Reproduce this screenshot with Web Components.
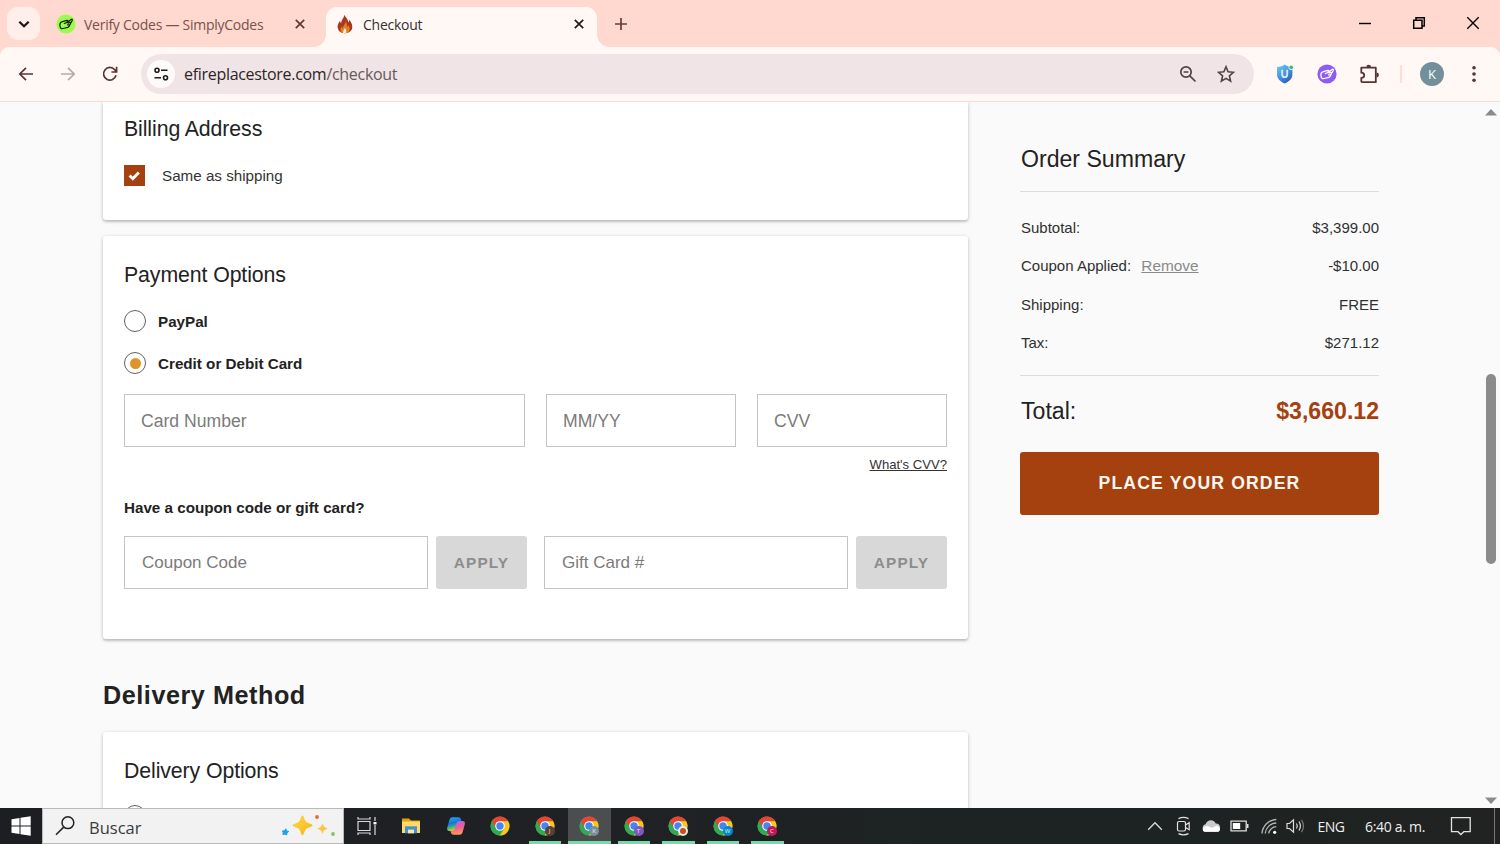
<!DOCTYPE html>
<html lang="en">
<head>
<meta charset="utf-8">
<title>Checkout</title>
<style>
    html, body { margin: 0; height: 100%; }
    body {
        width: 1500px;
        height: 844px;
        overflow: hidden;
        font-family: "Liberation Sans", Arial, sans-serif;
        color: #222;
    }
</style>
</head>
<body>
<browser-window></browser-window>
<script>
const ICONS = {
    chevron: [16, 16, '<path d="M3.300 5.700L8 10.300l4.700-4.600" fill="none" stroke="#24120f" stroke-width="2.200"/>'],
    close: [12, 12, '<path d="M1.800 1.800l8.400 8.400M10.200 1.800l-8.400 8.400" fill="none" stroke="currentColor" stroke-width="1.700"/>'],
    plus: [14, 14, '<path d="M7 1v12M1 7h12" stroke="#6b3b34" stroke-width="1.700"/>'],
    hand: [20, 20, `<circle cx="10" cy="10" r="9.600" fill="var(--disc)"/>
        <path d="M11 6.300L6.300 7.700C4.400 8.300 3.600 10 4 12.200c.3 1.800 1.200 2.700 3 2.300l4.800-1.200c1.200-.4 1.700-1.300 2.200-2.800l2.300-4.200c.3-1-.5-1.300-1.300-.8L11.300 8.400 8.300 9.500M11 6.300c1.300-.1 1.200 1.100.1 1.500M14 10.500l-2.500.4M12.300 9.200L14 8.300"
        fill="none" stroke="var(--ink)" stroke-width="1.250" stroke-linecap="round" stroke-linejoin="round"/>`],
    fire: [18, 20, `<path d="M8.500.7c.6 2.300 3.600 4 3.700 7.600.9-.5 1-1.500 1-2.600 2.300 2.400 3.700 6 2.900 8.900-.6 2.500-3.200 4.600-6.900 4.600-4.500 0-7.600-2.600-7.600-6.400 0-2.500 1.300-4.300 2.500-6 .2 1 .3 2 1.200 2.500C5 6 7.700 4.500 8.500.7z" fill="#aa371d"/>
        <path d="M9.700 7.300c1.600 2.200.8 3.700 1.800 5.600.6-.5.800-1 .9-1.800 1.600 2.500 1.900 5.700-.4 7.300-2.400 1.300-5.600.8-7-.8-1-1.700-.3-3.800 1-5.300.2 1 .4 1.700 1 2C6.700 11.700 9.500 10.600 9.700 7.300z" fill="#df8126"/>
        <path d="M7.200 19c-.4-2.400 1.100-3.300 1.700-5.300 1.100 2 1.900 3.300 1 5.300z" fill="#fff0d8"/>`],
    minimize: [14, 14, '<path d="M1 7.500h12" stroke="#000" stroke-width="1.400"/>'],
    restore: [14, 14, '<path d="M4 4V1.700h8.300V10H10M1.700 4.200H10v8H1.700z" fill="none" stroke="#000" stroke-width="1.500"/>'],
    exit: [14, 14, '<path d="M1.300 1.300l11.400 11.400M12.700 1.300L1.300 12.700" stroke="#000" stroke-width="1.400"/>'],
    back: [16, 16, '<path d="M15 8H2M8 1.800L1.800 8 8 14.200" fill="none" stroke="currentColor" stroke-width="1.700"/>'],
    forward: [16, 16, '<path d="M1 8h13M8 1.800L14.200 8 8 14.200" fill="none" stroke="currentColor" stroke-width="1.700"/>'],
    reload: [16, 16, '<path d="M14 9.300A6.300 6.300 0 1 1 12.700 3.700l1.600 1.700M14.600.8v5.200H9.400" fill="none" stroke="#5a3430" stroke-width="1.700"/>'],
    tune: [16, 16, '<g fill="none" stroke="#1f1b1b" stroke-width="1.600"><circle cx="4" cy="4.200" r="2"/><path d="M8 4.200h6.500M1.500 11.800H8"/><circle cx="12.500" cy="11.800" r="2"/></g>'],
    zoomOut: [18, 18, '<g fill="none" stroke="#514345" stroke-width="1.700"><circle cx="7" cy="7" r="5.200"/><path d="M10.800 10.800l5.700 5.700M4.600 7h4.800"/></g>'],
    star: [18, 18, '<path d="M9 1.800l2.100 5 5.400.5-4.100 3.600 1.200 5.300L9 13.400l-4.600 2.800 1.200-5.300L1.500 7.300l5.400-.5z" fill="none" stroke="#514345" stroke-width="1.600"/>'],
    shield: [18, 20, `<defs><linearGradient id="s" x1="0" y1="0" x2=".6" y2="1"><stop stop-color="#74cdf0"/><stop offset=".5" stop-color="#4b9ce0"/><stop offset="1" stop-color="#2c62bd"/></linearGradient></defs>
        <path d="M8.700.6c2 1.600 4.400 2.300 7.700 2.300v7.300c0 4.300-3 7.300-7.700 9.200C4 17.500 1 14.500 1 10.200V2.900c3.200 0 5.700-.7 7.700-2.300z" fill="url(#s)"/>
        <path d="M6.200 5.800v4.600c0 3.600 5 3.600 5 0V5.800" fill="none" stroke="#d3eafa" stroke-width="1.900"/><circle cx="15.200" cy="3.300" r="2.600" fill="#fff8f5"/><circle cx="15.200" cy="3.300" r="1.900" fill="#47b58a"/>`],
    puzzle: [20, 20, '<path d="M2.500 3.700h14.300v14.500H3.100q-.8 0-.8-.9v-3.400c3.900 0 3.900-5.200 0-5.200V3.700z" fill="none" stroke="#5a3430" stroke-width="1.800" stroke-linejoin="round"/><path d="M7.400 3a2.300 2.300 0 0 1 4.600 0zM17.500 8.600a2.300 2.300 0 0 1 0 4.800z" fill="#5a3430"/>'],
    dots: [6, 18, '<g fill="#5a3430"><circle cx="3" cy="2.700" r="1.800"/><circle cx="3" cy="9" r="1.800"/><circle cx="3" cy="15.300" r="1.800"/></g>'],
    check: [13, 13, '<path d="M1.600 6.500l3.200 3.200 6-6.300" fill="none" stroke="#fff" stroke-width="2.900"/>'],
    up: [12, 7, '<path d="M0 6.500L6 0l6 6.500z" fill="#8b8b8b"/>'],
    down: [12, 7, '<path d="M0 .5L6 7l6-6.500z" fill="#8b8b8b"/>'],
    windows: [20, 20, '<path d="M.5 3.200l8-1.200v7.500h-8zM9.500 1.800l10.200-1.500v9.200H9.500zM.5 10.500h8V18l-8-1.200zM9.500 10.500h10.200v9.200L9.500 18.200z" fill="#fff"/>'],
    search: [20, 20, '<g fill="none" stroke="#222" stroke-width="1.500"><circle cx="12.900" cy="6.700" r="5.900"/><path d="M8.700 11.100L1 18.700"/></g>'],
    sparkles: [56, 24, `<defs><linearGradient id="g" x2="1" y2="1"><stop stop-color="#ffd64b"/><stop offset=".55" stop-color="#fbc52b"/><stop offset="1" stop-color="#f5a61b"/></linearGradient></defs>
        <path d="M22.500 1.500c1.300 0 1.600 3.100 3 5.500 1.500 2.400 7 2.800 7 4.300 0 1.600-5.500 2-7 4.400-1.400 2.300-1.700 5.500-3 5.500s-1.600-3.200-3-5.500c-1.500-2.400-7-2.800-7-4.400 0-1.500 5.500-1.900 7-4.300 1.400-2.400 1.700-5.500 3-5.500z" fill="url(#g)"/>
        <path d="M42.500 10c.8 2.800 1.600 3.600 4.700 4.600-3.100 1-3.900 1.800-4.700 4.600-.8-2.800-1.600-3.600-4.700-4.600 3.100-1 3.900-1.800 4.700-4.600z" fill="#fbc33c" stroke="#fbc33c" stroke-width=".6"/>
        <path d="M5.900 14.800l.6 2.200 2.300.4-1.900 1.600-.2 2-1.900-.9-1.900.6.3-2.100-1-1.500 2.100-.4z" fill="#1da4e9" stroke="#1da4e9" stroke-linejoin="round"/>
        <circle cx="37" cy="3" r="1.900" fill="#ec6633"/><circle cx="53" cy="20" r="1.900" fill="#7dc65b"/>`],
    taskView: [20, 20, '<g fill="none" stroke="#d9d9d9" stroke-width="1.200"><path d="M1 5.500h12v9H1zM1 1v2h12V1M1 19v-2h12v2M18 1v4M18 9v10"/></g><path d="M16.500 6h3v2.400h-3z" fill="#fff"/>'],
    folder: [20, 18, '<path d="M1 1.500h7l2 2h9v3H1z" fill="#e0a30c"/><path d="M1 4.500h18V16H1z" fill="#ffda68"/><path d="M4 9.300h12v7H4z" fill="#4492cf"/><path d="M7 12.600h6v3.700H7z" fill="#ffe99c"/>'],
    copilot: [20, 20, `<defs><linearGradient id="a" x2=".3" y2="1"><stop stop-color="#23b5ee"/><stop offset=".5" stop-color="#1674dc"/><stop offset=".75" stop-color="#38b580"/><stop offset="1" stop-color="#d9cf33"/></linearGradient>
        <linearGradient id="b" x2=".2" y2="1"><stop stop-color="#a866f3"/><stop offset=".55" stop-color="#ee5d99"/><stop offset="1" stop-color="#ff9857"/></linearGradient></defs>
        <path id="r" d="M6.500 1.200h6q2 0 2.400 1.700l.7 2.300h-1.900q-2 0-2.500 2L9.400 13q-.5 1.900-2.400 1.900H3.300Q.6 14.900 1.200 11.800L3.500 3.500Q4.300 1.200 6.500 1.200z" fill="url(#a)"/>
        <path d="M13.500 18.800h-6q-2 0-2.400-1.700l-.7-2.300h1.900q2 0 2.500-2L10.600 7q.5-1.900 2.400-1.900h3.700q2.700 0 2.100 3.100L16.500 16.500q-.8 2.300-3 2.300z" fill="url(#b)"/>`],
    chrome: [20, 20, `<circle cx="10" cy="10" r="9.500" fill="#35a853"/>
        <path d="M10 10L1.800 5.200A9.500 9.500 0 0 1 18.200 5.300H10z" fill="#e94335"/><path d="M10 5.300h8.200A9.500 9.500 0 0 1 9.600 19.500L14.100 12.400z" fill="#fcc51c"/>
        <path d="M1.800 5.200L6 12 10 5.300z" fill="#e94335"/><path d="M1.770 5.250A9.500 9.500 0 0 0 9.600 19.500L14.100 12.400H5.900z" fill="#35a853"/>
        <circle cx="10" cy="10" r="4.800" fill="#fff"/><circle cx="10" cy="10" r="3.700" fill="#4285f4"/>`],
    caret: [16, 10, '<path d="M1.200 8.800L8 1.800l6.800 7" fill="none" stroke="#ddd" stroke-width="1.300"/>'],
    meet: [16, 20, '<g fill="none" stroke="#e2e2e2" stroke-width="1.200"><rect x="2.500" y="5.500" width="8" height="9.500" rx="1.500"/><path d="M10.500 9l3.700-2.300v7L10.500 11.500M3.500 2.600Q8.500.2 13.500 2.600M3.500 17.600q5 2.400 10 0"/></g>'],
    cloud: [20, 14, '<path d="M4.500 12.700a3.900 3.900 0 0 1 0-7.500C6.500 0 13 0 14.800 4.600a4 4 0 0 1 .4 8.100z" fill="#c8cbca"/><path d="M3 12.800a3 3 0 0 1 .2-5c3-2 5.800 0 7.800 1l4.600-2.300c3.400.8 4.600 4.600 1.800 6.300z" fill="#fff"/>'],
    battery: [20, 14, '<path d="M2 2.200h15.200v9.600H2z" fill="none" stroke="#ddd" stroke-width="1.300"/><path d="M3.800 4h7.400v6H3.800z" fill="#fff"/><path d="M17.800 5h1.700v4h-1.700z" fill="#ddd"/>'],
    wifi: [18, 18, '<g fill="none" stroke="#b4b7b6" stroke-width="1.300"><path d="M2 16.500A15 15 0 0 1 16.300 2.500M5.200 16.500A11.400 11.400 0 0 1 16.300 6M8.700 16.500A8 8 0 0 1 16.300 9.700"/></g><circle cx="14.700" cy="15.300" r="1.600" fill="#fff"/>'],
    sound: [20, 18, '<g fill="none" stroke="#ddd" stroke-width="1.200"><path d="M2 6.500h2.500l4-3.700v12.400l-4-3.700H2z"/><path d="M11.500 6.500q1.600 2.500 0 5M14 4.500q2.800 4.500 0 9"/><path d="M16.500 2.800q4 6.200 0 12.400" stroke="#777"/></g>'],
    notice: [22, 20, '<path d="M1.500 1.700h18.700v14h-6.400L10.900 18.500 8 15.700H1.500z" fill="none" stroke="#e2e2e2" stroke-width="1.300"/>']
};

class BaseElement extends HTMLElement {
    constructor() {
        super();
        this.shadow = this.attachShadow({ mode: "open" });
    }
    connectedCallback() {
        this.shadow.innerHTML = this.render();
    }
}

class UiIcon extends BaseElement {
    render() {
        const [w, h, body] = ICONS[this.getAttribute("name")];
        return `<style>
            :host { display: block; flex: none; line-height: 0; }
        </style>
        <svg width="${w}" height="${h}" viewBox="0 0 ${w} ${h}" aria-hidden="true">${body}</svg>`;
    }
}
customElements.define("ui-icon", UiIcon);

class BrowserTab extends BaseElement {
    render() {
        return `<style>
            :host {
                display: flex;
                align-items: center;
                position: relative;
                box-sizing: border-box;
                width: 271px;
                height: 40px;
                padding: 0 12px 5px 9px;
                color: #7c5049;
                font: 14px "Open Sans", "Noto Sans", sans-serif;
                letter-spacing: -.26px;
                border-radius: 11px 11px 0 0;
            }
            :host([active]) { background: #fff8f5; color: #37302f; }
            :host([active])::before, :host([active])::after {
                content: "";
                position: absolute;
                bottom: 0;
                width: 12px;
                height: 12px;
            }
            :host([active])::before {
                left: -12px;
                background: radial-gradient(circle at 0 0, transparent 11.5px, #fff8f5 12px);
            }
            :host([active])::after {
                right: -12px;
                background: radial-gradient(circle at 100% 0, transparent 11.5px, #fff8f5 12px);
            }
            .mark { display: flex; justify-content: center; width: 19px; margin-right: 9px; }
            .title { flex: 1; white-space: nowrap; }
            .close { padding-bottom: 2px; color: #5e3832; }
            :host([active]) .close { color: #211c1b; }
        </style>
        <span class="mark"><slot name="mark"></slot></span>
        <span class="title"><slot></slot></span>
        <ui-icon class="close" name="close"></ui-icon>`;
    }
}
customElements.define("browser-tab", BrowserTab);

class TabStrip extends BaseElement {
    render() {
        return `<style>
            :host { display: flex; height: 47px; background: #ffd9d0; }
            .menu {
                display: flex;
                align-items: center;
                justify-content: center;
                width: 33px;
                height: 33px;
                margin: 7px 15px 0 7px;
                border-radius: 11px;
                background: #ffeee9;
            }
            browser-tab { margin-top: 7px; }
            .first { width: 260px; padding: 0 9px 5px 1px; margin-right: 11px; }
            .plus { padding: 17px 0 0 17px; }
            .controls { display: flex; margin-left: auto; }
            .controls span { display: flex; justify-content: center; width: 54px; padding-top: 16px; }
            ui-icon { --disc: #9dfb4f; --ink: #15240c; }
            .fire { padding-bottom: 2px; }
        </style>
        <span class="menu"><ui-icon name="chevron"></ui-icon></span>
        <browser-tab class="first"><ui-icon slot="mark" class="fire" name="hand"></ui-icon>Verify Codes — SimplyCodes</browser-tab>
        <browser-tab active><ui-icon slot="mark" class="fire" name="fire"></ui-icon>Checkout</browser-tab>
        <ui-icon class="plus" name="plus"></ui-icon>
        <div class="controls">
            <span><ui-icon name="minimize"></ui-icon></span>
            <span><ui-icon name="restore"></ui-icon></span>
            <span><ui-icon name="exit"></ui-icon></span>
        </div>`;
    }
}
customElements.define("tab-strip", TabStrip);

class AddressBar extends BaseElement {
    render() {
        return `<style>
            :host { display: block; background: #ffd9d0; }
            .bar {
                display: flex;
                align-items: center;
                box-sizing: border-box;
                height: 55px;
                padding: 0 5px;
                border-bottom: 1px solid #fadcd6;
                border-radius: 9px 9px 0 0;
                background: #fff8f5;
            }
            .cell { display: flex; justify-content: center; width: 42px; color: #5a3430; }
            .off { color: #b9aaa7; }
            .field {
                display: flex;
                align-items: center;
                flex: 1;
                box-sizing: border-box;
                height: 40px;
                margin: 0 10px;
                padding: 0 19px 0 6px;
                border-radius: 20px;
                background: #f1e4e6;
            }
            .site {
                display: flex;
                align-items: center;
                justify-content: center;
                width: 28px;
                height: 28px;
                margin-right: 9px;
                border-radius: 50%;
                background: #fffafa;
            }
            .url {
                flex: 1;
                font: 16px "Open Sans", "Noto Sans", sans-serif;
                letter-spacing: -.3px;
                color: #2c2526;
            }
            .url i { font-style: normal; color: #67595b; }
            .star { margin-left: 20px; }
            .rule { width: 21px; display: flex; justify-content: center; }
            .rule::before { content: ""; width: 2px; height: 18px; background: #ffdcd4; }
            .avatar {
                width: 24px;
                height: 24px;
                border-radius: 50%;
                background: #71909c;
                color: #fff;
                font: 13px/24px "Open Sans", sans-serif;
                text-align: center;
            }
            .purple { --disc: #8d5cf6; --ink: #fff; }
        </style>
        <div class="bar">
            <span class="cell"><ui-icon name="back"></ui-icon></span>
            <span class="cell off"><ui-icon name="forward"></ui-icon></span>
            <span class="cell"><ui-icon name="reload"></ui-icon></span>
            <div class="field">
                <span class="site"><ui-icon name="tune"></ui-icon></span>
                <span class="url">efireplacestore.com<i>/checkout</i></span>
                <ui-icon name="zoomOut"></ui-icon>
                <ui-icon class="star" name="star"></ui-icon>
            </div>
            <span class="cell"><ui-icon name="shield"></ui-icon></span>
            <span class="cell purple"><ui-icon name="hand"></ui-icon></span>
            <span class="cell"><ui-icon name="puzzle"></ui-icon></span>
            <span class="rule"></span>
            <span class="cell"><span class="avatar">K</span></span>
            <span class="cell"><ui-icon name="dots"></ui-icon></span>
        </div>`;
    }
}
customElements.define("address-bar", AddressBar);

class CheckoutCard extends BaseElement {
    render() {
        return `<style>
            :host {
                display: block;
                box-sizing: border-box;
                padding: 26px 21px 0;
                border-radius: 3px;
                background: #fff;
                box-shadow: 0 1px 4px rgba(0, 0, 0, .2), 0 2px 2px rgba(0, 0, 0, .12);
            }
            h3 { margin: 0; font-size: 21.300px; line-height: 26px; font-weight: 400; letter-spacing: -.1px; }
        </style>
        <h3>${this.getAttribute("heading")}</h3>
        <slot></slot>`;
    }
}
customElements.define("checkout-card", CheckoutCard);

class RadioOption extends BaseElement {
    render() {
        return `<style>
            :host {
                display: flex;
                align-items: center;
                height: 22px;
                font-size: 15.2px;
                font-weight: 700;
            }
            .ring {
                display: flex;
                align-items: center;
                justify-content: center;
                box-sizing: border-box;
                width: 22px;
                height: 22px;
                margin-right: 12px;
                border: 1.5px solid #626262;
                border-radius: 50%;
            }
            :host([checked]) .ring::before {
                content: "";
                width: 11px;
                height: 11px;
                border-radius: 50%;
                background: #de9526;
            }
        </style>
        <span class="ring"></span><slot></slot>`;
    }
}
customElements.define("radio-option", RadioOption);

class TextField extends BaseElement {
    render() {
        return `<style>
            :host {
                display: block;
                box-sizing: border-box;
                height: 53px;
                padding-left: 16px;
                border: 1px solid #c4c4c4;
                background: #fff;
                color: #7b7b7b;
                font-size: 17.6px;
                line-height: 52px;
            }
        </style>
        <slot></slot>`;
    }
}
customElements.define("text-field", TextField);

class ActionButton extends BaseElement {
    render() {
        return `<style>
            :host {
                display: flex;
                align-items: center;
                justify-content: center;
                border-radius: 3px;
                background: #d8d8d8;
                color: #8d8d8d;
                font-size: 15.4px;
                font-weight: 700;
                letter-spacing: 1.1px;
            }
            :host([primary]) {
                height: 63px;
                background: #a5400f;
                color: #fff8f0;
                font-size: 17.6px;
                letter-spacing: 1.15px;
            }
        </style>
        <slot></slot>`;
    }
}
customElements.define("action-button", ActionButton);

class SummaryRow extends BaseElement {
    render() {
        return `<style>
            :host { display: flex; justify-content: space-between; align-items: center; font-size: 15px; line-height: 20px; color: #303030; }
            .label { padding-left: 1px; }
        </style>
        <span class="label"><slot></slot></span><span><slot name="value"></slot></span>`;
    }
}
customElements.define("summary-row", SummaryRow);

class OrderSummary extends BaseElement {
    render() {
        return `<style>
            :host { display: block; padding-top: 43px; }
            h2 { margin: 0; padding-left: 1px; font-size: 23.1px; line-height: 28px; font-weight: 400; }
            .rows { display: grid; row-gap: 18px; margin-top: 18px; padding: 26px 0 22px; border: solid #dcdcdc; border-width: 1px 0; }
            .shipping { padding-top: 1px; }
            u { margin-left: 6px; font-size: 15.4px; color: #8a8a8a; }
            .total { margin: 21px 0 27px; font-size: 23.1px; line-height: 28px; color: #222; }
            b { color: #a5400f; }
        </style>
        <h2>Order Summary</h2>
        <div class="rows">
            <summary-row>Subtotal:<span slot="value">$3,399.00</span></summary-row>
            <summary-row>Coupon Applied: <u>Remove</u><span slot="value">-$10.00</span></summary-row>
            <summary-row class="shipping">Shipping:<span slot="value">FREE</span></summary-row>
            <summary-row>Tax:<span slot="value">$271.12</span></summary-row>
        </div>
        <summary-row class="total">Total:<b slot="value">$3,660.12</b></summary-row>
        <action-button primary>PLACE YOUR ORDER</action-button>`;
    }
}
customElements.define("order-summary", OrderSummary);

class CheckoutPage extends BaseElement {
    render() {
        return `<style>
            :host { display: flex; overflow: hidden; background: #fafafa; }
            main {
                display: grid;
                grid-template-columns: 865px 359px;
                gap: 52px;
                flex: 1;
                padding-left: 103px;
            }
            .billing { height: 118px; padding-top: 14px; border-radius: 0 0 3px 3px; }
            .same { display: flex; align-items: center; margin-top: 23px; font-size: 15.2px; color: #333; }
            .box { display: flex; align-items: center; justify-content: center; width: 21px; height: 21px; margin-right: 17px; background: #a5400f; }
            .payment { height: 403px; margin-top: 16px; }
            .payment radio-option { margin-top: 20px; }
            .payment radio-option:first-of-type { margin-top: 22px; }
            .card { display: grid; grid-template-columns: 401px 190px 190px; gap: 21px; margin-top: 20px; }
            .hint { margin-top: 9px; font-size: 13.1px; line-height: 18px; text-align: right; text-decoration: underline; color: #333; }
            .question { margin: 24px 0 18px; font-size: 15.2px; line-height: 20px; font-weight: 700; }
            .codes { display: grid; grid-template-columns: 304px 91px 1px 304px 91px; column-gap: 8px; }
            .codes text-field { padding-left: 17px; font-size: 17px; }
            h2 { margin: 41px 0 21px; font-size: 25.2px; line-height: 31px; letter-spacing: .55px; }
            .delivery { height: 200px; }
            .delivery radio-option { margin-top: 21px; }
            .scroll {
                display: flex;
                flex-direction: column;
                align-items: center;
                width: 18px;
                padding: 7px 0 4px;
            }
            .thumb { width: 10px; height: 190px; margin: 258px 0 auto; border-radius: 5px; background: #8b8b8b; }
        </style>
        <main>
            <section>
                <checkout-card class="billing" heading="Billing Address">
                    <div class="same"><span class="box"><ui-icon name="check"></ui-icon></span>Same as shipping</div>
                </checkout-card>
                <checkout-card class="payment" heading="Payment Options">
                    <radio-option>PayPal</radio-option>
                    <radio-option checked>Credit or Debit Card</radio-option>
                    <div class="card">
                        <text-field>Card Number</text-field>
                        <text-field>MM/YY</text-field>
                        <text-field>CVV</text-field>
                    </div>
                    <div class="hint">What's CVV?</div>
                    <div class="question">Have a coupon code or gift card?</div>
                    <div class="codes">
                        <text-field>Coupon Code</text-field>
                        <action-button>APPLY</action-button>
                        <span></span>
                        <text-field>Gift Card #</text-field>
                        <action-button>APPLY</action-button>
                    </div>
                </checkout-card>
                <h2>Delivery Method</h2>
                <checkout-card class="delivery" heading="Delivery Options">
                    <radio-option></radio-option>
                </checkout-card>
            </section>
            <order-summary></order-summary>
        </main>
        <div class="scroll">
            <ui-icon name="up"></ui-icon>
            <span class="thumb"></span>
            <ui-icon name="down"></ui-icon>
        </div>`;
    }
}
customElements.define("checkout-page", CheckoutPage);

class TaskItem extends BaseElement {
    render() {
        return `<style>
            :host {
                display: flex;
                align-items: center;
                justify-content: center;
                position: relative;
                width: 42.5px;
                height: 36px;
            }
            :host([running])::after {
                content: "";
                position: absolute;
                bottom: 0;
                left: 5px;
                right: 5px;
                height: 3px;
                background: #72dda8;
            }
            :host([current]) { background: #4b4d4e; }
            :host([current])::after { left: 0; right: 0; }
            .badge {
                position: absolute;
                left: 21px;
                top: 18px;
                width: 10px;
                height: 10px;
                border-radius: 50%;
                background: var(--badge);
                color: #e8e8e8;
                font: 6px/10px "Open Sans", sans-serif;
                text-align: center;
            }
        </style>
        <ui-icon name="${this.getAttribute("icon")}"></ui-icon>
        ${this.hasAttribute("running") ? '<span class="badge"><slot></slot></span>' : ""}`;
    }
}
customElements.define("task-item", TaskItem);

class TaskBar extends BaseElement {
    render() {
        return `<style>
            :host {
                display: flex;
                height: 36px;
                background: linear-gradient(90deg, #1d1e22, #202124 40%, #1c2322 70%, #1e2322 88%, #222222);
                color: #eee;
                font: 14px "Open Sans", "Noto Sans", sans-serif;
            }
            .start { display: flex; align-items: center; justify-content: center; width: 42px; }
            .find {
                display: flex;
                align-items: center;
                box-sizing: border-box;
                width: 302px;
                padding: 0 7px 0 12px;
                border: 1px solid #b9b9b9;
                background: #f2f2f2;
                color: #3b3b3b;
                font-size: 16.5px;
            }
            .find span { flex: 1; padding: 2px 0 0 14px; }
            .apps { display: flex; gap: 2px; margin-left: 1.5px; }
            .dot { display: block; width: 6px; height: 6px; margin: 2px; border-radius: 50%; background: #c4501b; }
            .tray {
                display: grid;
                grid-template-columns: repeat(6, 28px) 44px 84px 48px 9px 6px;
                align-items: center;
                justify-items: center;
                margin-left: auto;
                white-space: nowrap;
            }
            .wifi { margin-left: 4px; }
            .lang { letter-spacing: -.5px; }
            .time { letter-spacing: -.3px; }
            .peek { width: 1px; height: 36px; grid-column: 11; justify-self: start; background: #777; }
        </style>
        <span class="start"><ui-icon name="windows"></ui-icon></span>
        <div class="find">
            <ui-icon name="search"></ui-icon><span>Buscar</span><ui-icon name="sparkles"></ui-icon>
        </div>
        <div class="apps">
            <task-item icon="taskView"></task-item>
            <task-item icon="folder"></task-item>
            <task-item icon="copilot"></task-item>
            <task-item icon="chrome"></task-item>
            <task-item icon="chrome" running style="--badge:#5b4037">J</task-item>
            <task-item icon="chrome" running current style="--badge:#78909c">K</task-item>
            <task-item icon="chrome" running style="--badge:#7e57c2">T</task-item>
            <task-item icon="chrome" running style="--badge:#e9e9e9"><i class="dot"></i></task-item>
            <task-item icon="chrome" running style="--badge:#0288d1">W</task-item>
            <task-item icon="chrome" running style="--badge:#c2185b">C</task-item>
        </div>
        <div class="tray">
            <ui-icon name="caret"></ui-icon>
            <ui-icon name="meet"></ui-icon>
            <ui-icon name="cloud"></ui-icon>
            <ui-icon name="battery"></ui-icon>
            <ui-icon class="wifi" name="wifi"></ui-icon>
            <ui-icon name="sound"></ui-icon>
            <span class="lang">ENG</span>
            <span class="time">6:40 a. m.</span>
            <ui-icon name="notice"></ui-icon>
            <span class="peek"></span>
        </div>`;
    }
}
customElements.define("task-bar", TaskBar);

class BrowserWindow extends BaseElement {
    render() {
        return `<style>
            :host { display: grid; grid-template-rows: 47px 55px minmax(0, 1fr) 36px; height: 844px; }
        </style>
        <tab-strip></tab-strip>
        <address-bar></address-bar>
        <checkout-page></checkout-page>
        <task-bar></task-bar>`;
    }
}
customElements.define("browser-window", BrowserWindow);
</script>
</body>
</html>
